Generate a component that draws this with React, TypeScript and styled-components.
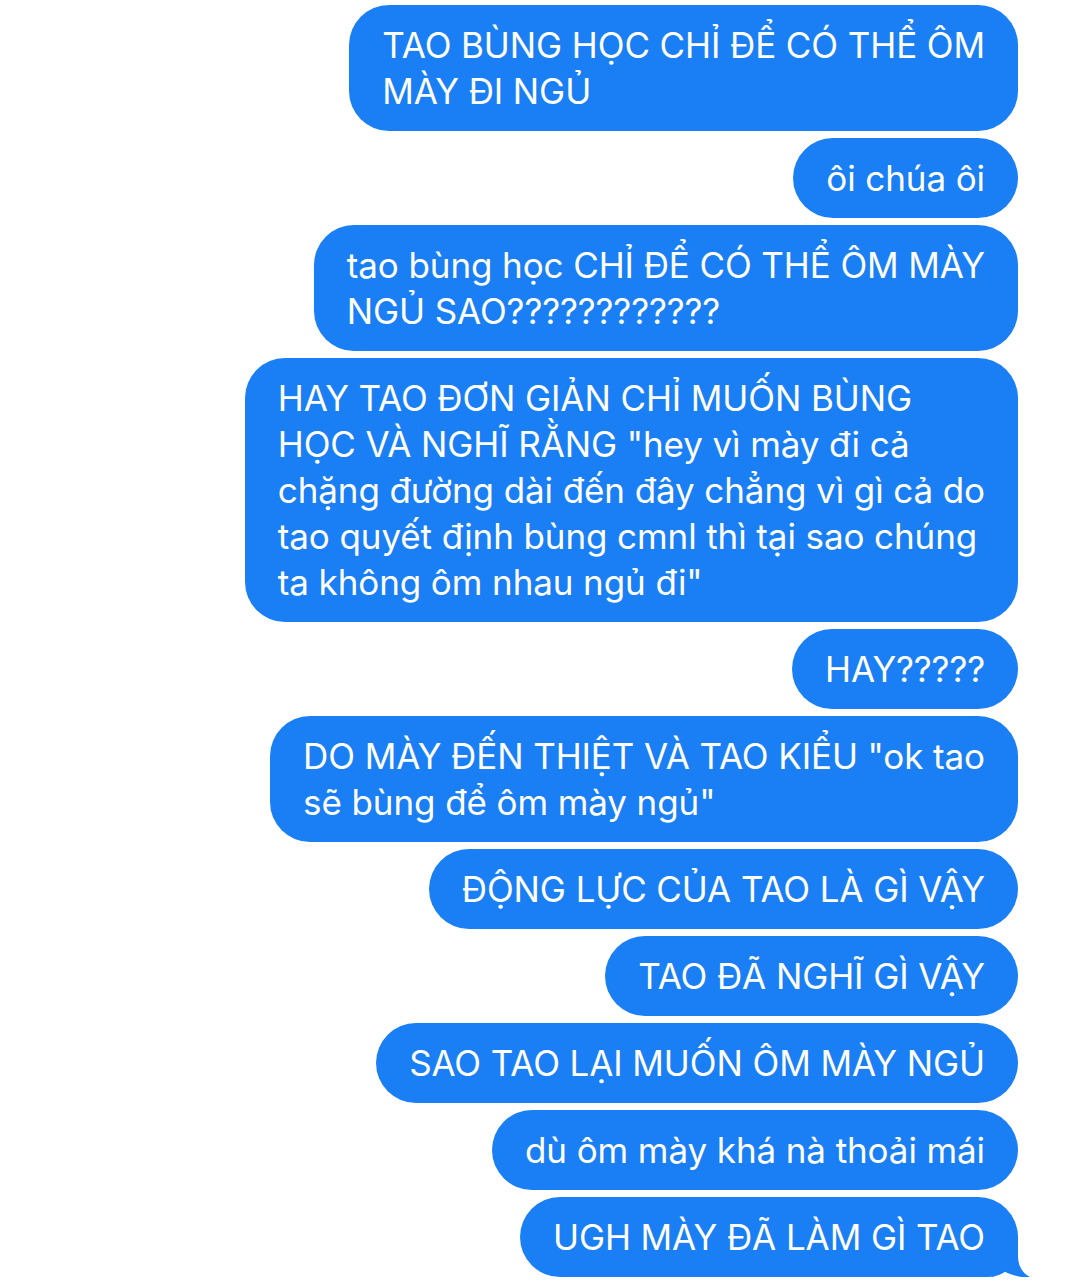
import React, { FC } from 'react';
import styled, { createGlobalStyle } from 'styled-components';

const messages: { lines: string[]; tail?: boolean }[] = [
    { lines: ['TAO BÙNG HỌC CHỈ ĐỂ CÓ THỂ ÔM', 'MÀY ĐI NGỦ'] },
    { lines: ['ôi chúa ôi'] },
    { lines: ['tao bùng học CHỈ ĐỂ CÓ THỂ ÔM MÀY', 'NGỦ SAO????????????'] },
    {
        lines: [
            'HAY TAO ĐƠN GIẢN CHỈ MUỐN BÙNG',
            'HỌC VÀ NGHĨ RẰNG "hey vì mày đi cả',
            'chặng đường dài đến đây chẳng vì gì cả do',
            'tao quyết định bùng cmnl thì tại sao chúng',
            'ta không ôm nhau ngủ đi"',
        ],
    },
    { lines: ['HAY?????'] },
    { lines: ['DO MÀY ĐẾN THIỆT VÀ TAO KIỂU "ok tao', 'sẽ bùng để ôm mày ngủ"'] },
    { lines: ['ĐỘNG LỰC CỦA TAO LÀ GÌ VẬY'] },
    { lines: ['TAO ĐÃ NGHĨ GÌ VẬY'] },
    { lines: ['SAO TAO LẠI MUỐN ÔM MÀY NGỦ'] },
    { lines: ['dù ôm mày khá nà thoải mái'] },
    { lines: ['UGH MÀY ĐÃ LÀM GÌ TAO'], tail: true },
];

const App: FC = () => {
    return (
        <>
            <GlobalStyle />
            <Thread>
                {messages.map((m, i) => (
                    <Bubble key={i} $tail={m.tail}>
                        {m.lines.map((line, j) => (
                            <Line key={j}>{line}</Line>
                        ))}
                        {m.tail && (
                            <Tail width="40" height="36" viewBox="0 0 40 36">
                                <path
                                    d="M26 0 L26 14 C26 25 31 32 40 36 C30 36 19 33 11 29 C7 32 4 34 0 35 L0 0 Z"
                                    fill="#1a7ff5"
                                />
                            </Tail>
                        )}
                    </Bubble>
                ))}
            </Thread>
        </>
    );
};

export default App;

const GlobalStyle = createGlobalStyle`
    html, body {
        margin: 0;
        padding: 0;
        background: #ffffff;
    }
`;

const Thread = styled.div`
    display: flex;
    flex-direction: column;
    align-items: flex-end;
    gap: 7px;
    padding: 5px 62px 0 0;
    font-family: Inter, "Noto Sans", sans-serif;
`;

const Bubble = styled.div<{ $tail?: boolean }>`
    position: relative;
    background: #1a7ff5;
    color: #ffffff;
    border-radius: 40px;
    border-bottom-right-radius: ${(p) => (p.$tail ? '30px' : '40px')};
    padding: 17px 33px;
    font-size: 35px;
    line-height: 46px;
    letter-spacing: -0.1px;
`;

const Line = styled.div`
    white-space: nowrap;
`;

const Tail = styled.svg`
    position: absolute;
    right: -14px;
    bottom: -1px;
`;
